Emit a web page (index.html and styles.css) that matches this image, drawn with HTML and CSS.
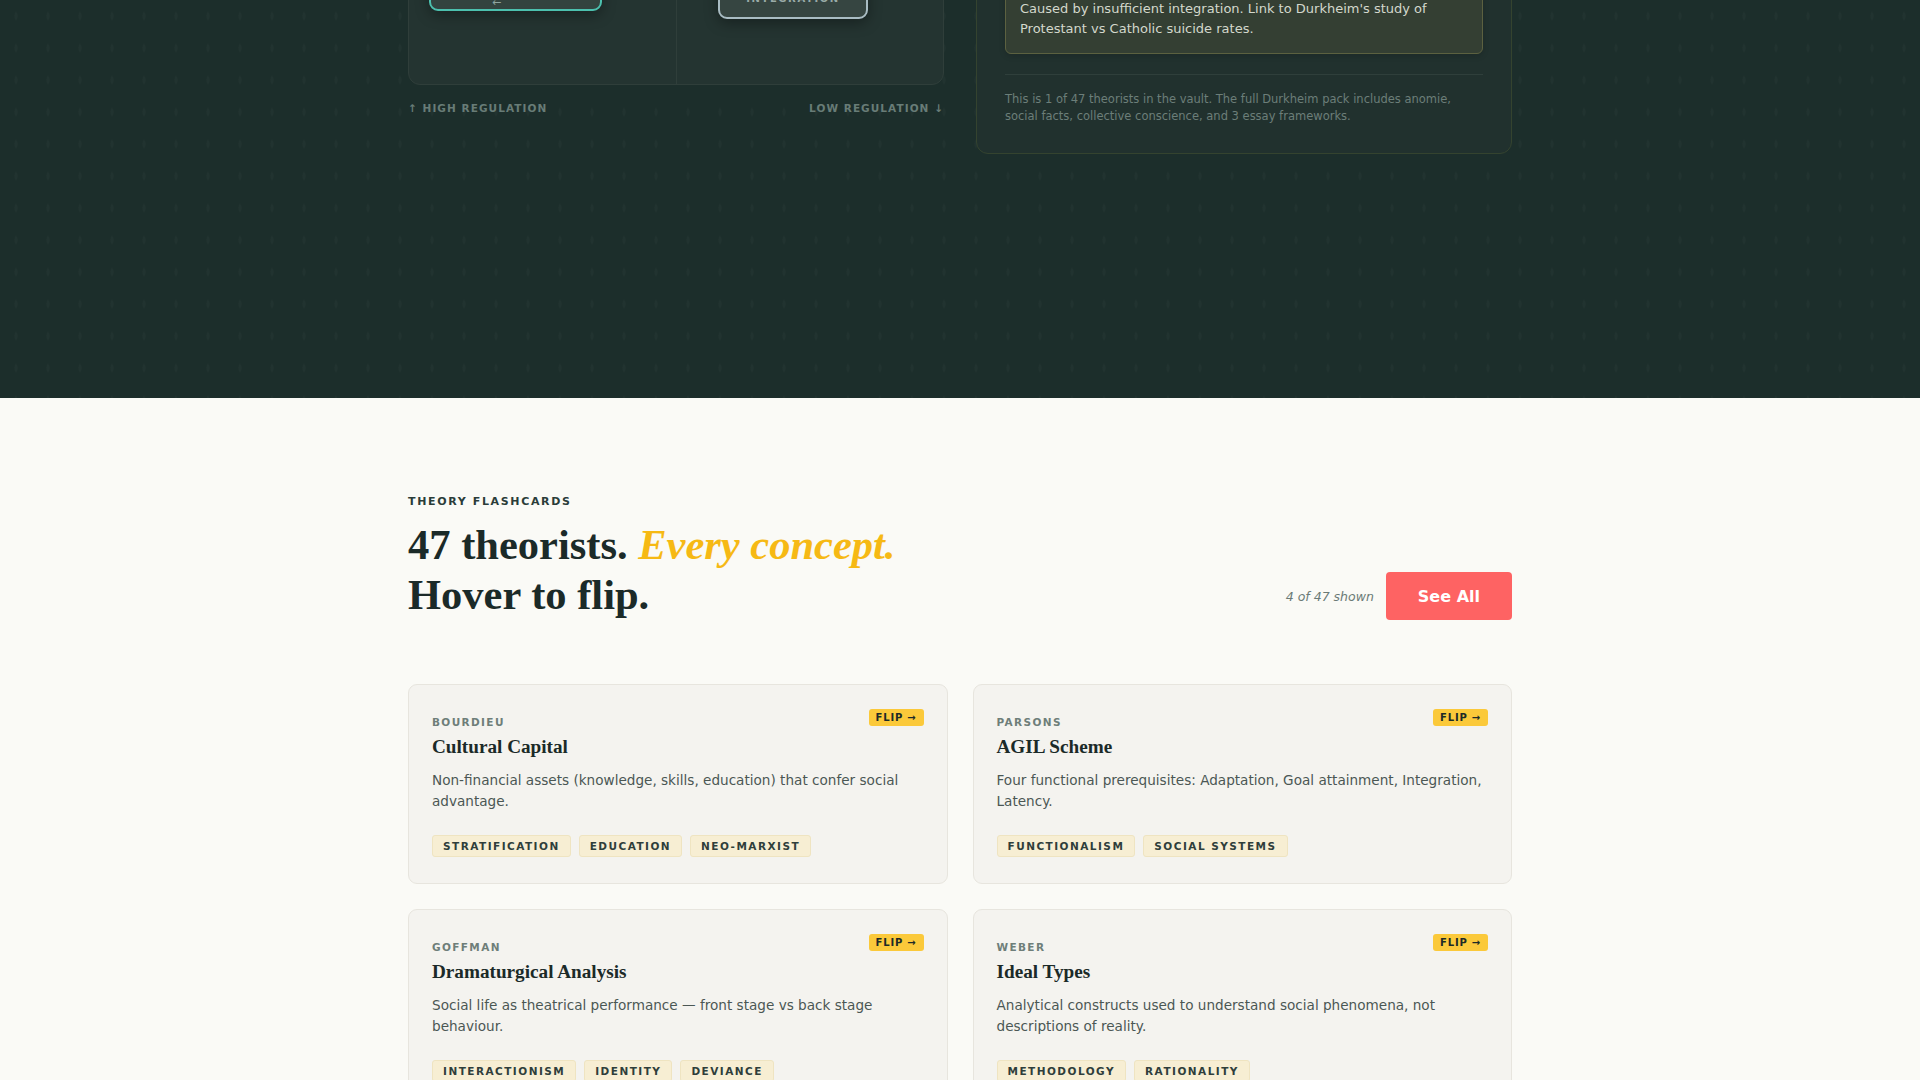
FILE: index.html
```html
<!DOCTYPE html>
<html lang="en">
<head>
<meta charset="utf-8">
<title>Theory Flashcards</title>
<link rel="stylesheet" href="styles.css">
</head>
<body>
<section class="dark">
  <div class="dark-inner">
    <div class="matrix-col">
      <div class="matrix">
        <div class="cell cell-a">
          <div class="node node-teal">
            <span class="node-title">EGOISTIC</span>
            <span class="node-arrow">←</span>
          </div>
        </div>
        <div class="cell cell-b">
          <div class="node node-grey">
            <span class="node-title">LOW</span>
            <span class="node-sub">INTEGRATION</span>
          </div>
        </div>
      </div>
      <div class="axis">
        <span>↑ HIGH REGULATION</span>
        <span>LOW REGULATION ↓</span>
      </div>
    </div>
    <aside class="panel">
      <h3 class="panel-title">Egoistic Suicide</h3>
      <div class="panel-note">Caused by insufficient integration. Link to Durkheim's study of Protestant vs Catholic suicide rates.</div>
      <p class="panel-foot">This is 1 of 47 theorists in the vault. The full Durkheim pack includes anomie, social facts, collective conscience, and 3 essay frameworks.</p>
    </aside>
  </div>
</section>

<section class="light">
  <div class="container">
    <header class="section-head">
      <div class="head-left">
        <div class="eyebrow">THEORY FLASHCARDS</div>
        <h2 class="headline">47 theorists. <em>Every concept.</em><br>Hover to flip.</h2>
      </div>
      <div class="head-right">
        <span class="count">4 of 47 shown</span>
        <a class="btn" href="#">See All</a>
      </div>
    </header>

    <div class="cards">
      <article class="card">
        <div class="card-head"><span class="theorist">BOURDIEU</span><span class="flip">FLIP →</span></div>
        <h3 class="card-title">Cultural Capital</h3>
        <p class="card-desc">Non-financial assets (knowledge, skills, education) that confer social advantage.</p>
        <div class="tags"><span class="tag">STRATIFICATION</span><span class="tag">EDUCATION</span><span class="tag">NEO-MARXIST</span></div>
      </article>
      <article class="card">
        <div class="card-head"><span class="theorist">PARSONS</span><span class="flip">FLIP →</span></div>
        <h3 class="card-title">AGIL Scheme</h3>
        <p class="card-desc">Four functional prerequisites: Adaptation, Goal attainment, Integration, Latency.</p>
        <div class="tags"><span class="tag">FUNCTIONALISM</span><span class="tag">SOCIAL SYSTEMS</span></div>
      </article>
      <article class="card">
        <div class="card-head"><span class="theorist">GOFFMAN</span><span class="flip">FLIP →</span></div>
        <h3 class="card-title">Dramaturgical Analysis</h3>
        <p class="card-desc">Social life as theatrical performance — front stage vs back stage behaviour.</p>
        <div class="tags"><span class="tag">INTERACTIONISM</span><span class="tag">IDENTITY</span><span class="tag">DEVIANCE</span></div>
      </article>
      <article class="card">
        <div class="card-head"><span class="theorist">WEBER</span><span class="flip">FLIP →</span></div>
        <h3 class="card-title">Ideal Types</h3>
        <p class="card-desc">Analytical constructs used to understand social phenomena, not descriptions of reality.</p>
        <div class="tags"><span class="tag">METHODOLOGY</span><span class="tag">RATIONALITY</span></div>
      </article>
    </div>
  </div>
</section>
</body>
</html>
```

FILE: styles.css
```css
* { box-sizing: border-box; }

html, body {
  margin: 0;
  padding: 0;
}

body {
  font-family: "DejaVu Sans", "Liberation Sans", sans-serif;
  background: #fafaf6;
  color: #1b2a28;
}

/* ---------- dark section ---------- */
.dark {
  background-color: #1c2e2b;
  background-image: radial-gradient(ellipse 2px 5px at 50% 50%, rgba(255, 255, 255, 0.025) 0, rgba(255, 255, 255, 0.025) 60%, transparent 100%);
  background-size: 32px 32px;
  padding-bottom: 244px;
  overflow: hidden;
}

.dark-inner {
  width: 1104px;
  margin: -100px auto 0;
  display: grid;
  grid-template-columns: 1fr 1fr;
  column-gap: 32px;
  align-items: start;
}

.matrix {
  height: 184.5px;
  display: grid;
  grid-template-columns: 1fr 1fr;
  background: #243431;
  border: 1px solid #2f3e3a;
  border-radius: 12px;
  overflow: hidden;
}

.cell {
  display: flex;
  flex-direction: column;
  justify-content: flex-end;
  align-items: flex-start;
}

.cell-a { padding: 0 0 73px 20px; }

.cell-b {
  border-left: 1px solid #2f3e3a;
  padding: 0 0 65px 41px;
}

.node {
  display: flex;
  flex-direction: column;
  align-items: center;
  border-radius: 9px;
  background: #33433f;
  box-shadow: 0 4px 14px rgba(0, 0, 0, 0.35);
  color: #a9b8b4;
}

.node-teal {
  width: 173px;
  border: 2px solid #4cc0ae;
  padding: 12px 12px 0;
}

.node-grey {
  width: 150px;
  border: 2px solid #a9bcc3;
  background: #364541;
  padding: 14px 12px 11px;
}

.node-title {
  font-size: 11px;
  font-weight: 700;
  letter-spacing: 0.14em;
  line-height: 16px;
  color: #dfe7e4;
}

.node-arrow {
  font-size: 11px;
  line-height: 12px;
  color: #8ea49f;
  margin-right: 38px;
}

.node-sub {
  font-size: 10px;
  font-weight: 700;
  letter-spacing: 0.16em;
  line-height: 14px;
  color: #9aaba8;
}

.axis {
  margin-top: 16px;
  display: flex;
  justify-content: space-between;
  font-size: 10.5px;
  font-weight: 700;
  letter-spacing: 0.1em;
  line-height: 14px;
  color: #687c77;
}

.panel {
  background: #21312e;
  border: 1px solid #34432f;
  border-radius: 12px;
  padding: 28px;
}

.panel-title {
  margin: 0;
  font-family: "Liberation Serif", serif;
  font-size: 26px;
  line-height: 32px;
  color: #f1f1ea;
}

.panel-note {
  margin-top: 23px;
  background: #343f33;
  border: 1px solid #5c6140;
  border-radius: 6px;
  padding: 14px;
  font-size: 13px;
  line-height: 20px;
  color: #d3d8cc;
  box-shadow: 0 2px 6px rgba(0, 0, 0, 0.15);
}

.panel-foot {
  margin: 20px 0 0;
  padding-top: 16px;
  border-top: 1px solid #2f3f3b;
  font-size: 11.5px;
  line-height: 17px;
  color: #6c7e79;
}

/* ---------- light section ---------- */
.light {
  background: #fafaf6;
  padding: 97px 0 96px;
}

.container {
  width: 1104px;
  margin: 0 auto;
}

.section-head {
  display: flex;
  justify-content: space-between;
  align-items: flex-end;
}

.eyebrow {
  font-size: 11px;
  font-weight: 700;
  letter-spacing: 0.15em;
  line-height: 14px;
  color: #2a3c39;
}

.headline {
  margin: 11px 0 0;
  font-family: "Liberation Serif", serif;
  font-weight: 700;
  font-size: 42.5px;
  line-height: 50px;
  color: #1b2a28;
}

.headline em {
  color: #f6b914;
  font-style: italic;
}

.head-right {
  display: flex;
  align-items: center;
  gap: 12px;
}

.count {
  font-size: 12.5px;
  font-style: italic;
  color: #6b7a76;
}

.btn {
  display: inline-flex;
  align-items: center;
  height: 48px;
  padding: 0 32px;
  background: #fe6363;
  color: #ffffff;
  font-size: 16px;
  font-weight: 700;
  text-decoration: none;
  border-radius: 4px;
}

.cards {
  margin-top: 64px;
  display: grid;
  grid-template-columns: 1fr 1fr;
  gap: 25px 25px;
}

.card {
  background: #f4f3ef;
  border: 1px solid #e7e5de;
  border-radius: 9px;
  padding: 24px 23px 26px 23px;
}

.card-head {
  display: flex;
  justify-content: space-between;
  align-items: flex-start;
}

.theorist {
  margin-top: 5px;
  font-size: 10.5px;
  font-weight: 700;
  letter-spacing: 0.13em;
  line-height: 16px;
  color: #6e7e79;
}

.flip {
  background: #fbc93a;
  color: #1d2a27;
  font-size: 10px;
  font-weight: 700;
  letter-spacing: 0.08em;
  line-height: 11px;
  padding: 3px 7px;
  border-radius: 3px;
}

.card-title {
  margin: 4px 0 0;
  font-family: "Liberation Serif", serif;
  font-weight: 700;
  font-size: 19.2px;
  line-height: 25px;
  color: #1b2a28;
}

.card-desc {
  margin: 11px 0 0;
  font-size: 13.6px;
  line-height: 21px;
  color: #4b5754;
}

.tags {
  margin-top: 23px;
  display: flex;
  flex-wrap: wrap;
  gap: 8px;
}

.tag {
  background: #f7eed3;
  border: 1px solid #efe4c1;
  border-radius: 3px;
  padding: 4px 10px;
  font-size: 10.5px;
  font-weight: 700;
  letter-spacing: 0.14em;
  line-height: 12px;
  color: #2f3e3b;
}
```
